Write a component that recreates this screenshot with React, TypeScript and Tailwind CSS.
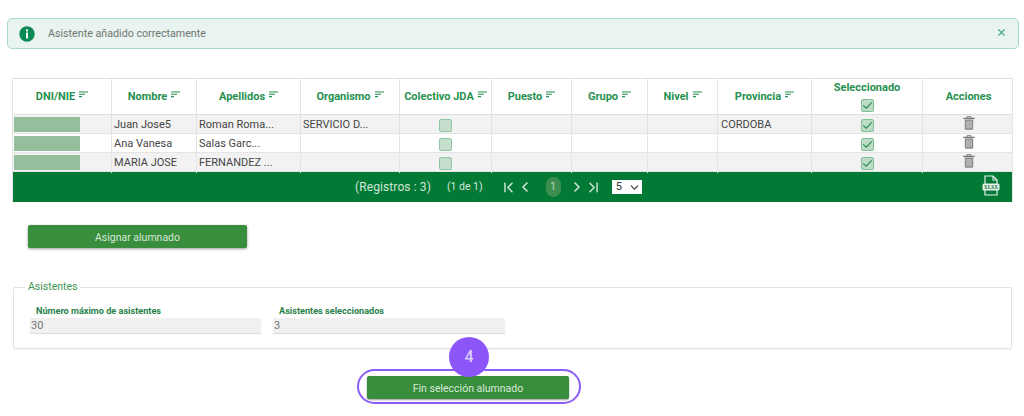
import { ChevronDown, ChevronFirst, ChevronLast, ChevronLeft, ChevronRight, X } from "lucide-react";

const cols = "grid grid-cols-[99px_85px_104px_99px_92px_80px_76px_70px_94px_111px_91px]";
const headers = ["DNI/NIE", "Nombre", "Apellidos", "Organismo", "Colectivo JDA", "Puesto", "Grupo", "Nivel", "Provincia"];
const rows = [
  { n: "Juan Jose5", a: "Roman Roma...", o: "SERVICIO D...", p: "CORDOBA", bg: "bg-[#f2f2f2]" },
  { n: "Ana Vanesa", a: "Salas Garc...", o: "", p: "", bg: "bg-white" },
  { n: "MARIA JOSE", a: "FERNANDEZ ...", o: "", p: "", bg: "bg-[#f2f2f2]" },
];

function SortIcon() {
  return (
    <svg width="9" height="7" viewBox="0 0 9 7" className="ml-[4px] mb-[6px] shrink-0">
      <path d="M0 1h9M0 3.3h6M0 5.6h3" stroke="#27914f" strokeWidth="1.1" fill="none" />
    </svg>
  );
}

function Box({ checked }: { checked?: boolean }) {
  return (
    <span className={`flex h-[13px] w-[13px] items-center justify-center rounded-[2px] border ${checked ? "border-[#7fc097] bg-[#bcdcc6]" : "border-[#8fc5a3] bg-[#c5dfcd]"}`}>
      {checked ? (
        <svg width="11" height="11" viewBox="0 0 11 11">
          <path d="M1.2 5.3l3 2.9 5.6-5.8" stroke="#2a8a4e" strokeWidth="1.1" fill="none" />
        </svg>
      ) : null}
    </span>
  );
}

function Trash() {
  return (
    <svg width="12" height="14" viewBox="0 0 12 14" className="mt-[-4px]">
      <path d="M4 1.8V.7h4v1.1" stroke="#777" strokeWidth="1" fill="none" />
      <path d="M.3 2.4h11.4" stroke="#777" strokeWidth="1.3" />
      <path d="M1.8 3.6h8.4v9.2a1 1 0 0 1-1 1H2.8a1 1 0 0 1-1-1z" fill="#8a8a8a" />
      <path d="M4 4.8v7.6M6 4.8v7.6M8 4.8v7.6" stroke="#e8e8e8" strokeWidth="0.8" />
    </svg>
  );
}

function Xlsx() {
  return (
    <svg width="18" height="21" viewBox="0 0 18 21">
      <path d="M3 9V1h8l4 4v4M3 15v5h12v-5" stroke="#e6f0e9" strokeWidth="1.2" fill="none" />
      <path d="M11 1v4h4" stroke="#e6f0e9" strokeWidth="1.1" fill="none" />
      <rect x="0.5" y="8.5" width="17" height="7" rx="1.5" fill="#e6f0e9" />
      <text x="9" y="14" textAnchor="middle" fontSize="5.4" fontWeight="700" fill="#027a35" fontFamily="'Liberation Serif', serif">XLSX</text>
    </svg>
  );
}

export default function App() {
  return (
    <div className="h-[416px] w-[1024px] overflow-hidden bg-white pt-[18px] font-['Roboto',sans-serif] text-[#444]">
      <div className="mx-[7px] flex h-[31px] w-[1012px] items-center rounded-[5px] border border-[#a9dcc6] bg-[#e9f3ef] pl-[11px] pr-[11px]">
        <svg width="16" height="16" viewBox="0 0 16 16" className="shrink-0">
          <circle cx="8" cy="8" r="7.7" fill="#0c8a55" />
          <rect x="7" y="3.4" width="2" height="2" fill="#fff" />
          <rect x="7" y="6.6" width="2" height="5.8" fill="#fff" />
        </svg>
        <span className="ml-[13px] mt-[1px] text-[10.7px] text-[#6f7773]">Asistente añadido correctamente</span>
        <X size={11} strokeWidth={2.4} className="ml-auto mb-[3px] text-[#3fa883]" />
      </div>

      <div className="ml-[12px] mt-[29px] w-[1001px] border-l border-r border-[#e4e4e4]">
        <div className={`${cols} h-[37px] border-b border-t border-[#dedede] bg-white`}>
          {headers.map((h) => (
            <div key={h} className="flex items-center justify-center border-r border-[#e4e4e4] pt-[2px] text-[11px] font-bold text-[#27914f]">
              <span className="whitespace-nowrap">{h}</span>
              <SortIcon />
            </div>
          ))}
          <div className="flex flex-col items-center justify-center gap-[5px] border-r border-[#e4e4e4] text-[11px] font-bold text-[#27914f]">
            <span className="leading-[13px]">Seleccionado</span>
            <Box checked />
          </div>
          <div className="flex items-center justify-center pt-[2px] text-[11px] font-bold text-[#27914f]">Acciones</div>
        </div>
        {rows.map((r) => (
          <div key={r.n} className={`${cols} h-[19px] border-b border-[#e4e4e4] text-[11px] leading-[20px] text-[#454545] ${r.bg}`}>
            <div className="border-r border-[#e4e4e4] pl-[1px] pt-[2px]">
              <div className="h-[15px] w-[66px] bg-[#94bf9d]" />
            </div>
            <div className="border-r border-[#e4e4e4] pl-[2px]">{r.n}</div>
            <div className="border-r border-[#e4e4e4] pl-[2px]">{r.a}</div>
            <div className="border-r border-[#e4e4e4] pl-[2px]">{r.o}</div>
            <div className="flex items-center justify-center border-r border-[#e4e4e4]"><Box /></div>
            <div className="border-r border-[#e4e4e4]" />
            <div className="border-r border-[#e4e4e4]" />
            <div className="border-r border-[#e4e4e4]" />
            <div className="border-r border-[#e4e4e4] pl-[3px]">{r.p}</div>
            <div className="flex items-center justify-center border-r border-[#e4e4e4]"><Box checked /></div>
            <div className="flex items-center justify-center"><Trash /></div>
          </div>
        ))}
        <div className="flex h-[30px] items-center bg-[#027a35] text-[#d3e6d9]">
          <span className="ml-[342px] shrink-0 text-[12px] tracking-[0.1px]">(Registros : 3)</span>
          <span className="ml-[16px] shrink-0 text-[10.5px]">(1 de 1)</span>
          <ChevronFirst size={17} strokeWidth={2} className="ml-[17px] shrink-0" />
          <ChevronLeft size={16} strokeWidth={2.4} className="shrink-0" />
          <span className="ml-[13px] flex h-[20px] w-[15px] shrink-0 items-center justify-center rounded-full bg-[#3d8f50] text-[11px] text-[#b9d8c2]">1</span>
          <ChevronRight size={16} strokeWidth={2.4} className="ml-[8px] shrink-0" />
          <ChevronLast size={17} strokeWidth={2} className="shrink-0" />
          <span className="ml-[10px] flex h-[14px] w-[30px] shrink-0 items-center justify-between bg-white pl-[4px] pr-[1px] text-[11px] text-[#333]">
            5 <ChevronDown size={13} strokeWidth={2} />
          </span>
          <span className="ml-auto mr-[12px] mt-[-4px]"><Xlsx /></span>
        </div>
      </div>

      <button className="ml-[28px] mt-[23px] block h-[23px] w-[219px] rounded-[2px] bg-[#388e3c] pt-[2px] text-[10.5px] text-[#d6e8d8] shadow-[0_1px_3px_rgba(0,0,0,0.4)]">
        Asignar alumnado
      </button>

      <fieldset className="ml-[13px] mt-[33px] h-[68px] w-[999px] rounded-[2px] border border-[#e2e2e2] px-[16px] shadow-[0_1px_1px_rgba(0,0,0,0.04)]">
        <legend className="ml-[-5px] px-[3px] text-[10.5px] leading-[12px] text-[#3b9650]">Asistentes</legend>
        <div className="mt-[12px] flex gap-[12px]">
          <div className="w-[231px]">
            <div className="pl-[6px] text-[9.15px] font-bold leading-[12px] text-[#27814a]">Número máximo de asistentes</div>
            <div className="mt-[1px] h-[15px] rounded-[1px] bg-[#f0f0f0] pl-[1px] text-[11px] leading-[16px] text-[#777] shadow-[0_1px_1px_rgba(0,0,0,0.15)]">30</div>
          </div>
          <div className="w-[232px]">
            <div className="pl-[6px] text-[9.15px] font-bold leading-[12px] text-[#27814a]">Asistentes seleccionados</div>
            <div className="mt-[1px] h-[15px] rounded-[1px] bg-[#f0f0f0] pl-[1px] text-[11px] leading-[16px] text-[#777] shadow-[0_1px_1px_rgba(0,0,0,0.15)]">3</div>
          </div>
        </div>
      </fieldset>

      <div className="relative ml-[367px] mt-[27px] h-[23px] w-[202px]">
        <div className="absolute left-[-10px] top-[-7px] h-[35px] w-[224px] rounded-full border-2 border-[#8b5cf6]" />
        <button className="absolute inset-0 rounded-[2px] bg-[#388e3c] pt-[2px] text-[10.5px] text-[#d6e8d8] shadow-[0_1px_2px_rgba(0,0,0,0.4)]">
          Fin selección alumnado
        </button>
        <div className="absolute left-[82px] top-[-39px] flex h-[40px] w-[40px] items-center justify-center rounded-full bg-[#8b55f7] text-[16px] font-medium text-[#dccdfb]">4</div>
      </div>
    </div>
  );
}
